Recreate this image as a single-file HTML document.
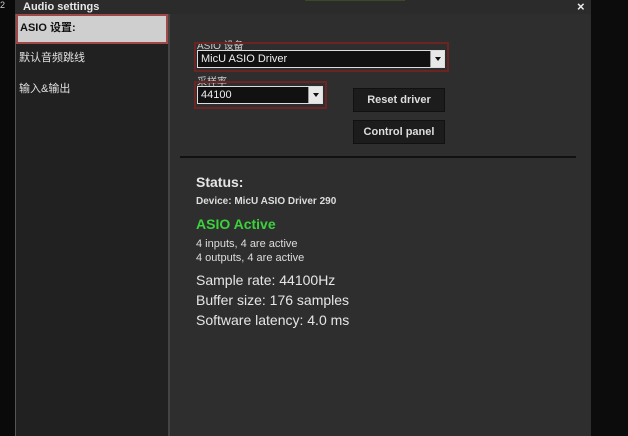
<!DOCTYPE html>
<html><head><meta charset="utf-8"><style>
*{margin:0;padding:0;box-sizing:border-box}
body{width:628px;height:436px;background:#0c0c0c;position:relative;overflow:hidden;font-family:"Liberation Sans","Noto Sans CJK SC",sans-serif;color:#ddd}
.a{position:absolute}
.title{left:15px;top:0;width:576px;height:14px;background:#2b2b2b;color:#e8e8e8;font-weight:bold;font-size:11px;line-height:14px;padding-left:8px}
.side{left:15px;top:14px;width:155px;height:422px;background:#212121;border-left:1px solid #555;border-right:2px solid #444}
.main{left:170px;top:14px;width:421px;height:422px;background:#2e2e2e}
.sel{left:16px;top:14px;width:152px;height:30px;background:#cfcfcf;border:2px solid #a04848;color:#111;font-weight:bold;font-size:11px;line-height:24px;padding-left:2px}
.item{left:19px;font-size:11px;color:#e0e0e0}
.red{border:2px solid #6a2424}
.selbox{background:#111;border:1px solid #ddd;color:#eee;font-size:11px;line-height:16px;padding-left:3px}
.arr{position:absolute;right:0;top:0;width:14px;height:16px;background:#e8e8e8;border-left:1px solid #999}
.arr:after{content:"";position:absolute;left:4px;top:6px;border-left:3px solid transparent;border-right:3px solid transparent;border-top:4px solid #111}
.btn{left:353px;width:92px;height:24px;background:#1c1c1c;border:1px solid #111;color:#ddd;font-weight:bold;font-size:11px;text-align:center;line-height:22px}
.lab{font-size:10px;color:#ccc}
</style></head><body>
<div class="a" style="left:0;top:0;width:15px;height:436px;background:#0a0a0a"></div>
<div class="a" style="left:0;top:0;width:6px;height:10px;color:#ccc;font-size:9px">2</div>
<div class="a title">Audio settings</div>
<div class="a" style="left:577px;top:-1px;color:#eee;font-size:13px;font-weight:bold">×</div>
<div class="a" style="left:305px;top:0;width:100px;height:1px;background:#3a4a22"></div>
<div class="a side"></div>
<div class="a main"></div>
<div class="a sel">ASIO 设置:</div>
<div class="a item" style="top:49px">默认音频跳线</div>
<div class="a item" style="top:80px">输入&amp;输出</div>

<div class="a lab" style="left:197px;top:37px">ASIO 设备</div>
<div class="a red" style="left:194px;top:42px;width:255px;height:30px"></div>
<div class="a selbox" style="left:197px;top:50px;width:248px;height:18px">MicU ASIO Driver<div class="arr"></div></div>
<div class="a lab" style="left:197px;top:73px">采样率</div>
<div class="a red" style="left:194px;top:81px;width:133px;height:28px"></div>
<div class="a selbox" style="left:197px;top:86px;width:126px;height:18px">44100<div class="arr"></div></div>
<div class="a btn" style="top:88px">Reset driver</div>
<div class="a btn" style="top:120px">Control panel</div>
<div class="a" style="left:180px;top:156px;width:396px;height:2px;background:#111"></div>

<div class="a" style="left:196px;top:174px;font-size:14px;font-weight:bold;color:#e6e6e6">Status:</div>
<div class="a" style="left:196px;top:196px;font-size:10px;font-weight:bold;color:#ddd">Device: MicU ASIO Driver 290</div>
<div class="a" style="left:196px;top:216px;font-size:14px;font-weight:bold;color:#3bd23b">ASIO Active</div>
<div class="a" style="left:196px;top:237px;font-size:11px;color:#ddd;line-height:14px">4 inputs, 4 are active<br>4 outputs, 4 are active</div>
<div class="a" style="left:196px;top:270px;font-size:14px;color:#e6e6e6;line-height:20px">Sample rate: 44100Hz<br>Buffer size: 176 samples<br>Software latency: 4.0 ms</div>
</body></html>
